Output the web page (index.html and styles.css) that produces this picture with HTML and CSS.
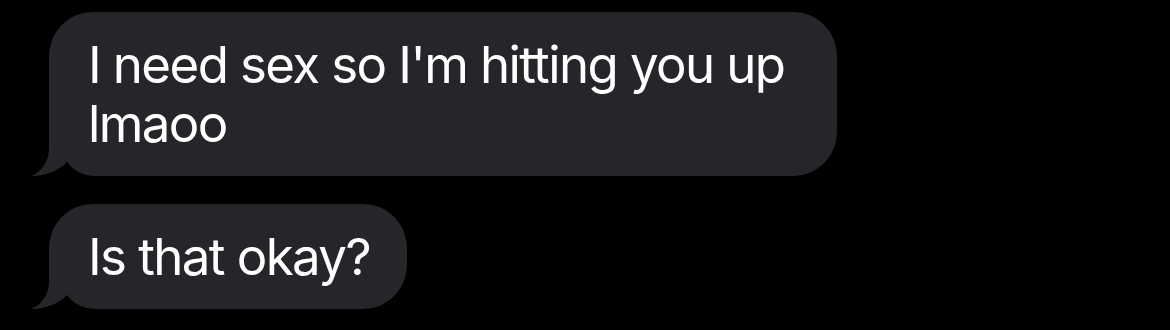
FILE: index.html
```html
<!DOCTYPE html>
<html>
<head>
<meta charset="utf-8">
<link rel="stylesheet" href="styles.css">
</head>
<body>
<div class="thread">
  <div class="bubble">
    <svg class="tail" viewBox="-18 -32 66 32" width="66" height="32" aria-hidden="true">
      <rect x="0" y="-32" width="48" height="32" fill="#000"/>
      <path d="M0,-32 L0,-28 C0,-14 -8,-4 -17.5,0 C-6,0.5 10,-5 18,-14 C24,-6 33,0 48,0 L48,-32 Z" fill="#262529"/>
    </svg>
    <span class="text">I need sex so I'm hitting you up lmaoo</span>
  </div>
  <div class="bubble">
    <svg class="tail" viewBox="-18 -32 66 32" width="66" height="32" aria-hidden="true">
      <rect x="0" y="-32" width="48" height="32" fill="#000"/>
      <path d="M0,-32 L0,-28 C0,-14 -8,-4 -17.5,0 C-6,0.5 10,-5 18,-14 C24,-6 33,0 48,0 L48,-32 Z" fill="#262529"/>
    </svg>
    <span class="text">Is that okay?</span>
  </div>
</div>
</body>
</html>
```
FILE: styles.css
```css
html, body {
  margin: 0;
  padding: 0;
  background: #000;
}
body {
  width: 1170px;
  height: 330px;
  overflow: hidden;
}
.thread {
  display: flex;
  flex-direction: column;
  align-items: flex-start;
  gap: 28px;
  padding: 12px 0 0 49px;
}
.bubble {
  position: relative;
  box-sizing: border-box;
  max-width: 788px;
  padding: 23px 37px 23px 39px;
  background: #262529;
  border-radius: 44px;
  border-bottom-left-radius: 0;
  color: #fff;
  font-family: "Inter", "Noto Sans", sans-serif;
  font-size: 51px;
  line-height: 59px;
  letter-spacing: -1.6px;
}
.tail {
  position: absolute;
  left: -18px;
  bottom: 0;
  display: block;
}
.text {
  position: relative;
}
```
